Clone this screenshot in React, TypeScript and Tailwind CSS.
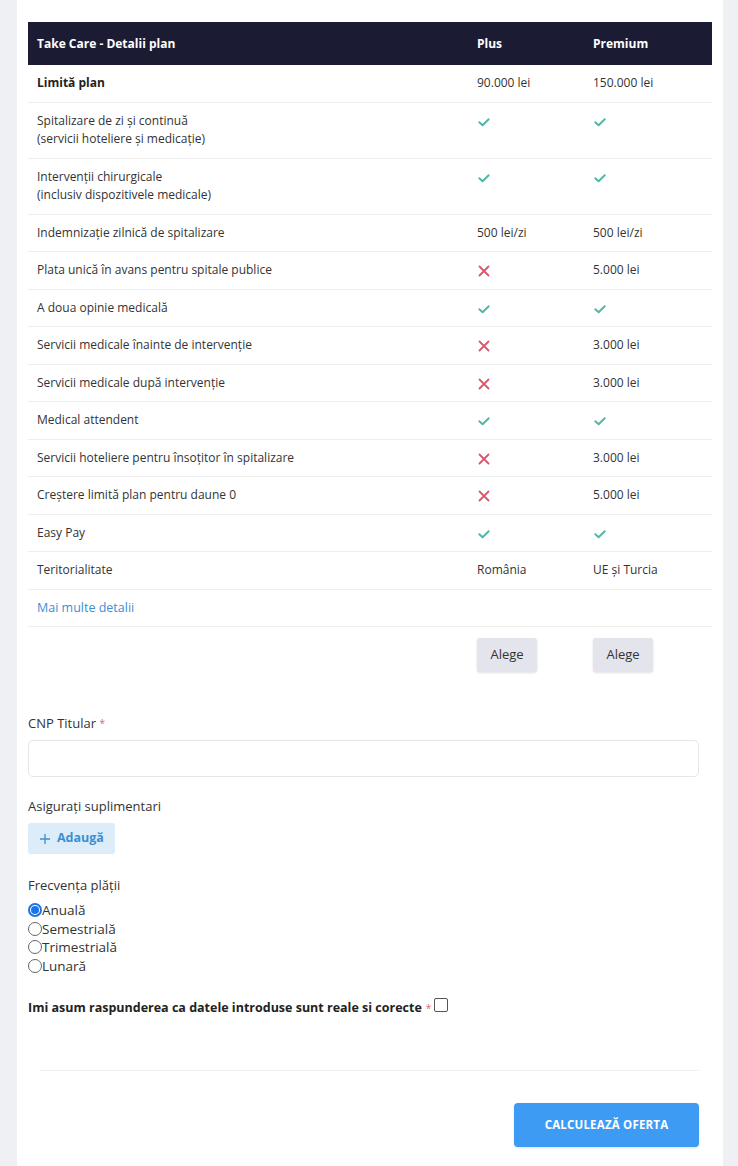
import React from "react";

type Cell = { t: "check" } | { t: "x" } | { t: "text"; v: string };

const C: Cell = { t: "check" };
const X: Cell = { t: "x" };
const T = (v: string): Cell => ({ t: "text", v });

const rows: { label: string[]; bold?: boolean; plus: Cell; prem: Cell }[] = [
  { label: ["Limită plan"], bold: true, plus: T("90.000 lei"), prem: T("150.000 lei") },
  { label: ["Spitalizare de zi și continuă", "(servicii hoteliere și medicație)"], plus: C, prem: C },
  { label: ["Intervenții chirurgicale", "(inclusiv dispozitivele medicale)"], plus: C, prem: C },
  { label: ["Indemnizație zilnică de spitalizare"], plus: T("500 lei/zi"), prem: T("500 lei/zi") },
  { label: ["Plata unică în avans pentru spitale publice"], plus: X, prem: T("5.000 lei") },
  { label: ["A doua opinie medicală"], plus: C, prem: C },
  { label: ["Servicii medicale înainte de intervenție"], plus: X, prem: T("3.000 lei") },
  { label: ["Servicii medicale după intervenție"], plus: X, prem: T("3.000 lei") },
  { label: ["Medical attendent"], plus: C, prem: C },
  { label: ["Servicii hoteliere pentru însoțitor în spitalizare"], plus: X, prem: T("3.000 lei") },
  { label: ["Creștere limită plan pentru daune 0"], plus: X, prem: T("5.000 lei") },
  { label: ["Easy Pay"], plus: C, prem: C },
  { label: ["Teritorialitate"], plus: T("România"), prem: T("UE și Turcia") },
];

function Check() {
  return (
    <svg width="14" height="14" viewBox="0 0 14 14" className="mt-[3px]">
      <path d="M2.3 7.2 L5.6 10.2 L11.7 4.2" fill="none" stroke="#4db6a4" strokeWidth="1.9" strokeLinecap="round" strokeLinejoin="round" />
    </svg>
  );
}

function Cross() {
  return (
    <svg width="14" height="14" viewBox="0 0 14 14" className="mt-[3px]">
      <path d="M2.5 2.5 L11.5 11.5 M11.5 2.5 L2.5 11.5" fill="none" stroke="#d9566d" strokeWidth="1.8" strokeLinecap="round" />
    </svg>
  );
}

function CellView({ c }: { c: Cell }) {
  if (c.t === "check") return <Check />;
  if (c.t === "x") return <Cross />;
  return <span className="text-[#333]">{c.v}</span>;
}

function Radio({ checked, label }: { checked?: boolean; label: string }) {
  return (
    <div className="flex items-center h-[18.5px]">
      <span
        className={
          checked
            ? "w-[14px] h-[14px] rounded-full border-2 border-[#1a73e8] flex items-center justify-center"
            : "w-[14px] h-[14px] rounded-full border border-[#666]"
        }
      >
        {checked && <span className="w-[8px] h-[8px] rounded-full bg-[#1a73e8]" />}
      </span>
      <span className="text-[13.5px] text-[#333]">{label}</span>
    </div>
  );
}

export default function App() {
  return (
    <div
      className="min-h-[1166px] bg-[#eef0f3] pl-[17px] pr-[15px]"
      style={{ fontFamily: '"Open Sans", "Noto Sans", sans-serif' }}
    >
      <div className="bg-white min-h-[1166px] px-[11px] pt-[22px]">
        {/* Table */}
        <div className="w-[684px] text-[12px] text-[#333]">
          <div className="grid grid-cols-[440px_116px_128px] bg-[#1b1c33] h-[43px] items-center font-bold text-white text-[12px]">
            <div className="pl-[9px]">Take Care - Detalii plan</div>
            <div className="pl-[9px]">Plus</div>
            <div className="pl-[9px]">Premium</div>
          </div>
          {rows.map((r, i) => (
            <div
              key={i}
              className="grid grid-cols-[440px_116px_128px] border-b border-[#eeeeee] py-[9px] leading-[18.5px]"
            >
              <div className={r.bold ? "pl-[9px] font-bold text-[#222]" : "pl-[9px]"}>
                {r.label.map((l, j) => (
                  <div key={j}>{l}</div>
                ))}
              </div>
              <div className="pl-[9px]">
                <CellView c={r.plus} />
              </div>
              <div className="pl-[9px]">
                <CellView c={r.prem} />
              </div>
            </div>
          ))}
          <div className="border-b border-[#eeeeee] py-[9px] leading-[18.5px] pl-[9px] text-[12.5px] text-[#3d8fd1]">
            Mai multe detalii
          </div>
          <div className="grid grid-cols-[440px_116px_128px] pt-[11px]">
            <div />
            <div className="pl-[9px]">
              <button className="w-[60px] h-[34px] rounded-[3px] bg-[#e3e4ec] text-[13px] text-[#333] shadow-sm">Alege</button>
            </div>
            <div className="pl-[9px]">
              <button className="w-[60px] h-[34px] rounded-[3px] bg-[#e3e4ec] text-[13px] text-[#333] shadow-sm">Alege</button>
            </div>
          </div>
        </div>

        {/* Form */}
        <div className="w-[671px] mt-[42px] text-[#333]">
          <div className="text-[13px] leading-[18px]">
            CNP Titular <span className="text-[#e06666] text-[10px] align-top">*</span>
          </div>
          <div className="mt-[8px] h-[37px] rounded-[5px] border border-[#e6e6e6]" />

          <div className="mt-[20px] text-[13px] leading-[18px]">Asigurați suplimentari</div>
          <button className="mt-[8px] flex items-center gap-[6px] h-[31px] px-[11px] rounded-[3px] bg-[#dcecf9] text-[#3d8fd1] text-[12.5px] font-bold">
            <svg width="12" height="12" viewBox="0 0 12 12">
              <path d="M6 1 V11 M1 6 H11" stroke="#3d8fd1" strokeWidth="1.3" />
            </svg>
            Adaugă
          </button>

          <div className="mt-[22px] text-[13px] leading-[18px]">Frecvența plății</div>
          <div className="mt-[7px]">
            <Radio checked label="Anuală" />
            <Radio label="Semestrială" />
            <Radio label="Trimestrială" />
            <Radio label="Lunară" />
          </div>

          <div className="mt-[24px] flex items-center text-[12.5px] font-bold text-[#222]">
            <span>Imi asum raspunderea ca datele introduse sunt reale si corecte</span>
            <span className="ml-[4px] text-[#e06666] font-normal text-[10px]">*</span>
            <span className="ml-[3px] w-[14px] h-[14px] border border-[#555] rounded-[2px] -mt-[6px]" />
          </div>

          <div className="mt-[52px] ml-[12px] border-t border-[#f0f0f0]" />

          <div className="flex justify-end mt-[32px]">
            <button className="w-[185px] h-[44px] rounded-[4px] bg-[#3d9bf3] text-white text-[11.5px] font-bold tracking-[0.2px] shadow-sm">
              CALCULEAZĂ OFERTA
            </button>
          </div>
        </div>
      </div>
    </div>
  );
}
